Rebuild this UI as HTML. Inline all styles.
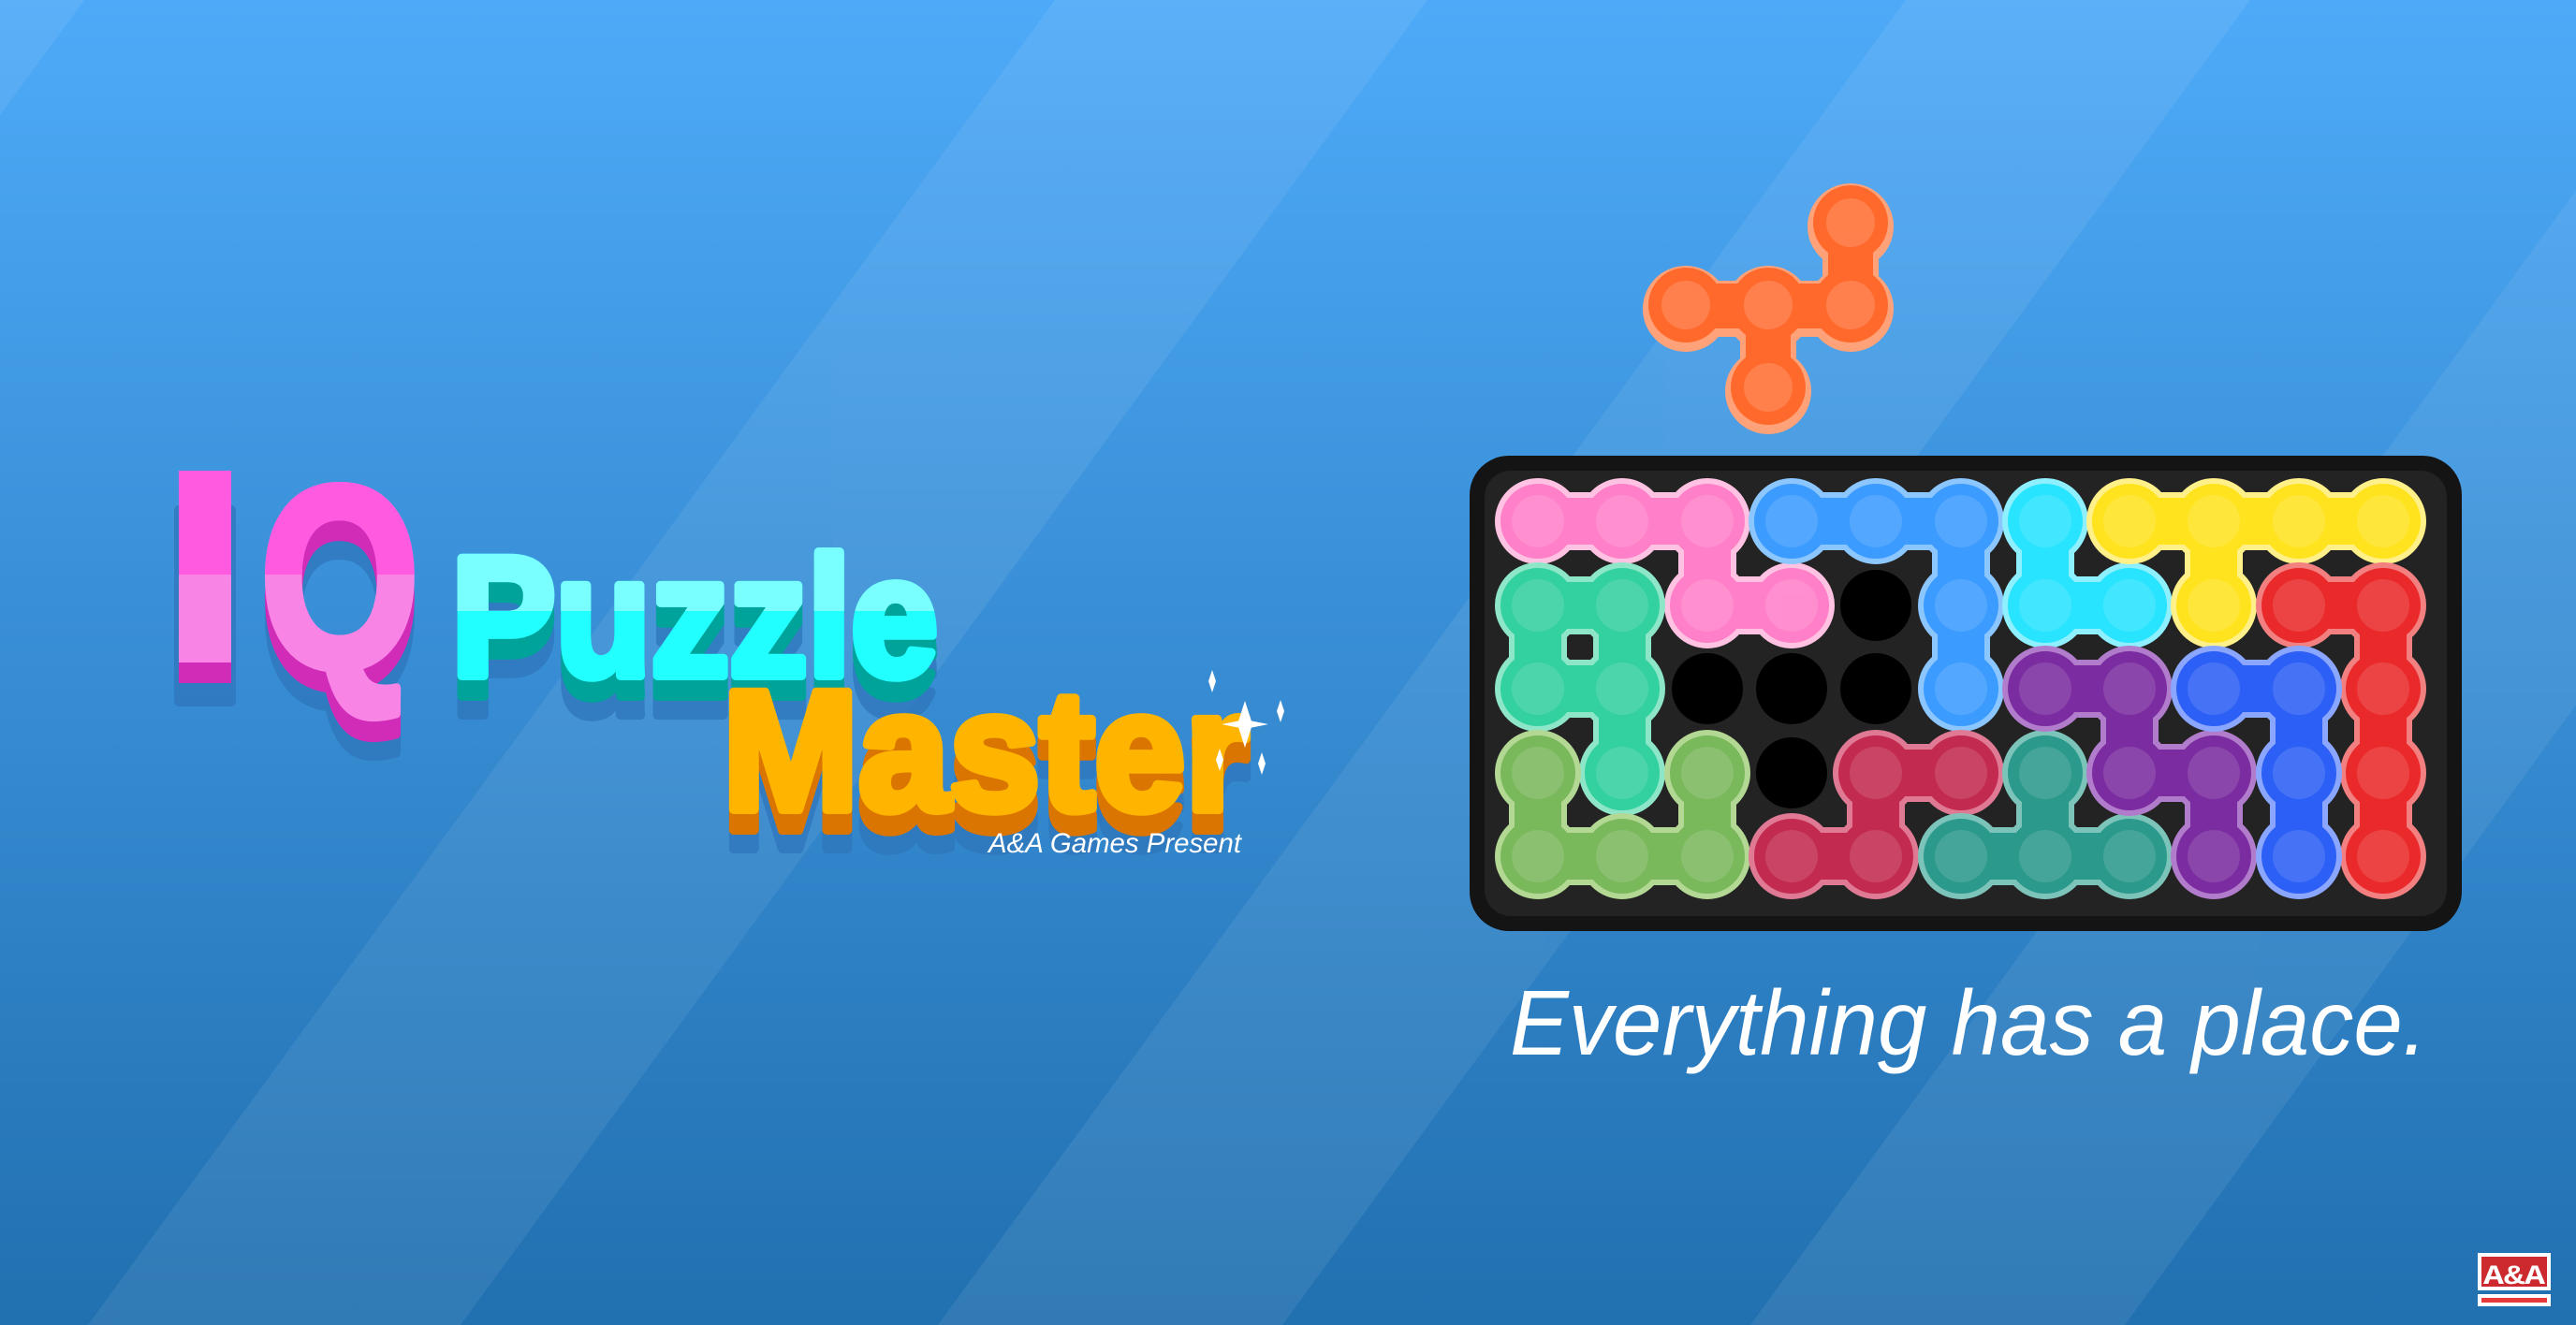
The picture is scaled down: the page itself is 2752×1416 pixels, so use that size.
<!DOCTYPE html>
<html><head><meta charset="utf-8"><style>
html,body{margin:0;padding:0;width:2752px;height:1416px;overflow:hidden}
svg{display:block}
</style></head><body>
<svg width="2752" height="1416" viewBox="0 0 2752 1416" xmlns="http://www.w3.org/2000/svg">
<defs>
<linearGradient id="bg" x1="0" y1="0" x2="0" y2="1">
<stop offset="0" stop-color="#4eaaf8"/>
<stop offset="1" stop-color="#2170b0"/>
</linearGradient>
</defs>
<rect width="2752" height="1416" fill="url(#bg)"/>
<g fill="#ffffff" opacity="0.07">
<polygon points="1127,0 1525,0 492,1416 94,1416"/>
<polygon points="2036,0 2404,0 1370,1416 1002,1416"/>
<polygon points="-200,0 90,0 -944,1416 -1234,1416"/>
<polygon points="2900,0 3300,0 2270,1416 1870,1416"/>
</g>

<g font-family="Liberation Sans, sans-serif" font-weight="bold" stroke-linejoin="round">
<g transform="translate(0,42)" fill="#2f77bd" stroke="#2f77bd" stroke-width="10" opacity="0.8">
<rect x="191" y="503" width="56" height="205"/>
<text x="278" y="712" font-size="275" textLength="170" lengthAdjust="spacingAndGlyphs">Q</text>
<text x="482" y="722" font-size="182" textLength="520" lengthAdjust="spacingAndGlyphs">Puzzle</text>
<text x="772" y="865" font-size="182" textLength="562" lengthAdjust="spacingAndGlyphs">Master</text>
</g>
<g transform="translate(0,22)">
<rect x="191" y="503" width="56" height="205" fill="#d02cb8"/>
<text x="278" y="712" font-size="275" fill="#d02cb8" stroke="#d02cb8" stroke-width="10" textLength="170" lengthAdjust="spacingAndGlyphs">Q</text>
<text x="482" y="722" font-size="182" fill="#00a39a" stroke="#00a39a" stroke-width="10" textLength="520" lengthAdjust="spacingAndGlyphs">Puzzle</text>
<text x="772" y="865" font-size="182" fill="#d97500" stroke="#d97500" stroke-width="10" textLength="562" lengthAdjust="spacingAndGlyphs">Master</text>
</g>
<rect x="191" y="503" width="56" height="205" fill="#f884e6"/>
<text x="278" y="712" font-size="275" fill="#f884e6" stroke="#f884e6" stroke-width="10" textLength="170" lengthAdjust="spacingAndGlyphs">Q</text>
<clipPath id="topI"><rect x="0" y="0" width="470" height="614"/></clipPath>
<g clip-path="url(#topI)">
<rect x="191" y="503" width="56" height="205" fill="#ff5ae0"/>
<text x="278" y="712" font-size="275" fill="#ff5ae0" stroke="#ff5ae0" stroke-width="10" textLength="170" lengthAdjust="spacingAndGlyphs">Q</text>
</g>
<text x="482" y="722" font-size="182" fill="#22ffff" stroke="#22ffff" stroke-width="10" textLength="520" lengthAdjust="spacingAndGlyphs">Puzzle</text>
<clipPath id="topP"><rect x="470" y="0" width="560" height="653"/></clipPath>
<text x="482" y="722" font-size="182" fill="#7affff" stroke="#7affff" stroke-width="10" textLength="520" lengthAdjust="spacingAndGlyphs" clip-path="url(#topP)">Puzzle</text>
<text x="772" y="865" font-size="182" fill="#ffb400" stroke="#ffb400" stroke-width="10" textLength="562" lengthAdjust="spacingAndGlyphs">Master</text>
</g>
<g fill="#ffffff">
<path d="M1291 728 l4 12 l4 -12 l-4 -12z"/>
<path d="M1322 774 l8 -25 l8 25 l-8 25z M1305 774 l25 -5 l25 5 l-25 5z"/>
<path d="M1364 760 l4 -12 l4 12 l-4 12z"/>
<path d="M1299 812 l4 -12 l4 12 l-4 12z"/>
<path d="M1344 816 l4 -12 l4 12 l-4 12z"/>
</g>
<text x="1056" y="911" font-family="Liberation Sans, sans-serif" font-style="italic" font-size="30" fill="#ffffff" textLength="270" lengthAdjust="spacingAndGlyphs">A&amp;A Games Present</text>

<g>
<path d="M1801 330 H1977 V242 M1889 330 V418" stroke="#ffa27a" stroke-width="60" stroke-linecap="round" fill="none"/>
<g fill="#ffa27a"><circle cx="1801" cy="330" r="46"/><circle cx="1889" cy="330" r="46"/><circle cx="1977" cy="330" r="46"/><circle cx="1977" cy="242" r="46"/><circle cx="1889" cy="418" r="46"/></g>
<g fill="#ff6a2c"><circle cx="1801" cy="326" r="40"/><circle cx="1889" cy="326" r="40"/><circle cx="1977" cy="326" r="40"/><circle cx="1977" cy="238" r="40"/><circle cx="1889" cy="414" r="40"/></g>
<path d="M1801 327 H1977 V239 M1889 327 V415" stroke="#ff6a2c" stroke-width="48" stroke-linecap="round" fill="none"/>
<g fill="#ffffff" opacity="0.15"><circle cx="1801" cy="326" r="26"/><circle cx="1889" cy="326" r="26"/><circle cx="1977" cy="326" r="26"/><circle cx="1977" cy="238" r="26"/><circle cx="1889" cy="414" r="26"/></g>
</g>

<rect x="1570" y="487" width="1060" height="508" rx="42" fill="#141414"/>
<rect x="1586" y="503" width="1028" height="476" rx="28" fill="#232323"/>
<g fill="#000">
<circle cx="2004" cy="647" r="38"/><circle cx="1824" cy="736" r="38"/><circle cx="1914" cy="736" r="38"/><circle cx="2004" cy="736" r="38"/><circle cx="1914" cy="826" r="38"/>
</g>

<g fill="none" stroke-linecap="round" stroke-linejoin="round" stroke-width="62">
<path stroke="#ffc2e2" d="M1643 557 H1824 V647 H1914"/>
<path stroke="#8cc6ff" d="M1914 557 H2095 V736"/>
<path stroke="#8ef0ff" d="M2185 557 V647 H2275"/>
<path stroke="#fff08a" d="M2275 557 H2546 M2365 557 V647"/>
<path stroke="#f28080" d="M2456 647 H2546 V915"/>
<path stroke="#8ee6c8" d="M1643 647 H1733 V826 M1643 647 V736 H1733"/>
<path stroke="#b2d894" d="M1643 826 V915 H1824 V826"/>
<path stroke="#e07a94" d="M2095 826 H2004 V915 H1914"/>
<path stroke="#7cc4ba" d="M2185 826 V915 M2095 915 H2275"/>
<path stroke="#b27ccc" d="M2185 736 H2275 V826 H2365 V915"/>
<path stroke="#8aa6ff" d="M2365 736 H2456 V915"/>
</g>
<g stroke-width="6">
<g fill="#ff7fc8" stroke="#ffc2e2"><circle cx="1643" cy="557" r="43"/><circle cx="1733" cy="557" r="43"/><circle cx="1824" cy="557" r="43"/><circle cx="1824" cy="647" r="43"/><circle cx="1914" cy="647" r="43"/></g>
<g fill="#3b9bff" stroke="#8cc6ff"><circle cx="1914" cy="557" r="43"/><circle cx="2004" cy="557" r="43"/><circle cx="2095" cy="557" r="43"/><circle cx="2095" cy="647" r="43"/><circle cx="2095" cy="736" r="43"/></g>
<g fill="#28e4ff" stroke="#8ef0ff"><circle cx="2185" cy="557" r="43"/><circle cx="2185" cy="647" r="43"/><circle cx="2275" cy="647" r="43"/></g>
<g fill="#ffe31f" stroke="#fff08a"><circle cx="2275" cy="557" r="43"/><circle cx="2365" cy="557" r="43"/><circle cx="2456" cy="557" r="43"/><circle cx="2546" cy="557" r="43"/><circle cx="2365" cy="647" r="43"/></g>
<g fill="#ea2a2a" stroke="#f28080"><circle cx="2456" cy="647" r="43"/><circle cx="2546" cy="647" r="43"/><circle cx="2546" cy="736" r="43"/><circle cx="2546" cy="826" r="43"/><circle cx="2546" cy="915" r="43"/></g>
<g fill="#33d0a0" stroke="#8ee6c8"><circle cx="1643" cy="647" r="43"/><circle cx="1733" cy="647" r="43"/><circle cx="1643" cy="736" r="43"/><circle cx="1733" cy="736" r="43"/><circle cx="1733" cy="826" r="43"/></g>
<g fill="#7ab85c" stroke="#b2d894"><circle cx="1643" cy="826" r="43"/><circle cx="1643" cy="915" r="43"/><circle cx="1733" cy="915" r="43"/><circle cx="1824" cy="915" r="43"/><circle cx="1824" cy="826" r="43"/></g>
<g fill="#c22a50" stroke="#e07a94"><circle cx="2095" cy="826" r="43"/><circle cx="2004" cy="826" r="43"/><circle cx="2004" cy="915" r="43"/><circle cx="1914" cy="915" r="43"/></g>
<g fill="#2b998c" stroke="#7cc4ba"><circle cx="2185" cy="826" r="43"/><circle cx="2185" cy="915" r="43"/><circle cx="2095" cy="915" r="43"/><circle cx="2275" cy="915" r="43"/></g>
<g fill="#7a2ca0" stroke="#b27ccc"><circle cx="2185" cy="736" r="43"/><circle cx="2275" cy="736" r="43"/><circle cx="2275" cy="826" r="43"/><circle cx="2365" cy="826" r="43"/><circle cx="2365" cy="915" r="43"/></g>
<g fill="#2c5ff5" stroke="#8aa6ff"><circle cx="2365" cy="736" r="43"/><circle cx="2456" cy="736" r="43"/><circle cx="2456" cy="826" r="43"/><circle cx="2456" cy="915" r="43"/></g>
</g>
<g fill="none" stroke-linecap="round" stroke-linejoin="round" stroke-width="50">
<path stroke="#ff7fc8" d="M1643 557 H1824 V647 H1914"/>
<path stroke="#3b9bff" d="M1914 557 H2095 V736"/>
<path stroke="#28e4ff" d="M2185 557 V647 H2275"/>
<path stroke="#ffe31f" d="M2275 557 H2546 M2365 557 V647"/>
<path stroke="#ea2a2a" d="M2456 647 H2546 V915"/>
<path stroke="#33d0a0" d="M1643 647 H1733 V826 M1643 647 V736 H1733"/>
<path stroke="#7ab85c" d="M1643 826 V915 H1824 V826"/>
<path stroke="#c22a50" d="M2095 826 H2004 V915 H1914"/>
<path stroke="#2b998c" d="M2185 826 V915 M2095 915 H2275"/>
<path stroke="#7a2ca0" d="M2185 736 H2275 V826 H2365 V915"/>
<path stroke="#2c5ff5" d="M2365 736 H2456 V915"/>
</g>
<g fill="#ffffff" opacity="0.12">
<circle cx="1643" cy="557" r="28"/><circle cx="1733" cy="557" r="28"/><circle cx="1824" cy="557" r="28"/><circle cx="1824" cy="647" r="28"/><circle cx="1914" cy="647" r="28"/>
<circle cx="1914" cy="557" r="28"/><circle cx="2004" cy="557" r="28"/><circle cx="2095" cy="557" r="28"/><circle cx="2095" cy="647" r="28"/><circle cx="2095" cy="736" r="28"/>
<circle cx="2185" cy="557" r="28"/><circle cx="2185" cy="647" r="28"/><circle cx="2275" cy="647" r="28"/>
<circle cx="2275" cy="557" r="28"/><circle cx="2365" cy="557" r="28"/><circle cx="2456" cy="557" r="28"/><circle cx="2546" cy="557" r="28"/><circle cx="2365" cy="647" r="28"/>
<circle cx="2456" cy="647" r="28"/><circle cx="2546" cy="647" r="28"/><circle cx="2546" cy="736" r="28"/><circle cx="2546" cy="826" r="28"/><circle cx="2546" cy="915" r="28"/>
<circle cx="1643" cy="647" r="28"/><circle cx="1733" cy="647" r="28"/><circle cx="1643" cy="736" r="28"/><circle cx="1733" cy="736" r="28"/><circle cx="1733" cy="826" r="28"/>
<circle cx="1643" cy="826" r="28"/><circle cx="1643" cy="915" r="28"/><circle cx="1733" cy="915" r="28"/><circle cx="1824" cy="915" r="28"/><circle cx="1824" cy="826" r="28"/>
<circle cx="2095" cy="826" r="28"/><circle cx="2004" cy="826" r="28"/><circle cx="2004" cy="915" r="28"/><circle cx="1914" cy="915" r="28"/>
<circle cx="2185" cy="826" r="28"/><circle cx="2185" cy="915" r="28"/><circle cx="2095" cy="915" r="28"/><circle cx="2275" cy="915" r="28"/>
<circle cx="2185" cy="736" r="28"/><circle cx="2275" cy="736" r="28"/><circle cx="2275" cy="826" r="28"/><circle cx="2365" cy="826" r="28"/><circle cx="2365" cy="915" r="28"/>
<circle cx="2365" cy="736" r="28"/><circle cx="2456" cy="736" r="28"/><circle cx="2456" cy="826" r="28"/><circle cx="2456" cy="915" r="28"/>
</g>

<text x="1613" y="1127" font-family="Liberation Sans, sans-serif" font-style="italic" font-size="98" fill="#ffffff" textLength="980" lengthAdjust="spacingAndGlyphs">Everything has a place.</text>

<rect x="2647" y="1339" width="78" height="40" fill="#ffffff"/>
<rect x="2651" y="1343" width="70" height="32" fill="#cc2a2e"/>
<text x="2686" y="1372" font-family="Liberation Mono, monospace" font-weight="bold" font-size="30" fill="#ffffff" text-anchor="middle" textLength="66" lengthAdjust="spacingAndGlyphs">A&amp;A</text>
<rect x="2647" y="1383" width="78" height="13" fill="#ffffff"/>
<rect x="2651" y="1387" width="70" height="5" fill="#e83a3a"/>
</svg>
</body></html>
